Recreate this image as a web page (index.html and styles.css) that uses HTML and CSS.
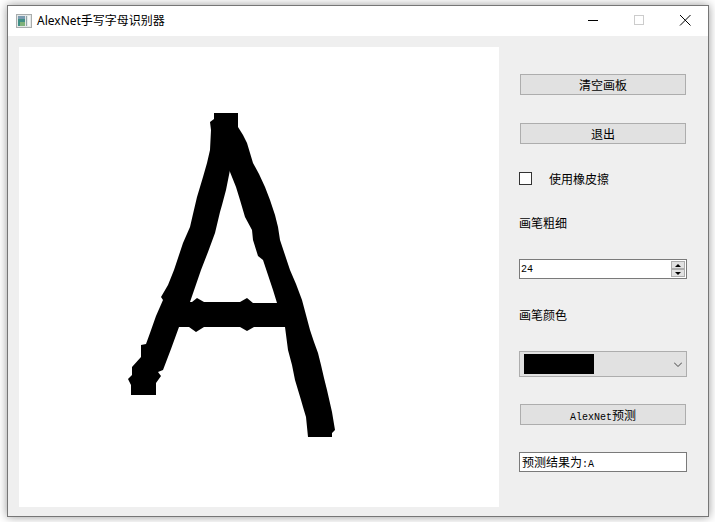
FILE: index.html
```html
<!DOCTYPE html>
<html lang="zh-CN">
  <head>
    <meta charset="UTF-8" />
    <meta name="viewport" content="width=device-width, initial-scale=1.0" />
    <title>AlexNet手写字母识别器</title>
    <link rel="stylesheet" href="styles.css">
  </head>
  <body>
    <div class="window">
      <div class="titlebar">
        <svg class="app-icon" width="16" height="14" viewBox="0 0 16 14">
          <rect x="0.5" y="0.5" width="15" height="13" fill="#e4e8e8" stroke="#a9adad" />
          <rect x="2" y="2" width="7" height="10" fill="#3f8f86" />
          <rect x="2" y="2" width="7" height="3" fill="#7a9ab0" />
          <rect x="4" y="8" width="5" height="4" fill="#7fb27a" />
          <rect x="10" y="2" width="1" height="10" fill="#8fa4a8" />
          <rect x="12" y="2" width="2" height="10" fill="#f6f8f8" />
        </svg>
        <span class="title">AlexNet手写字母识别器</span>
        <div class="win-controls">
          <svg class="win-btn" width="46" height="30" viewBox="0 0 46 30">
            <path d="M18 14.5H28" stroke="#000" fill="none" />
          </svg>
          <svg class="win-btn" width="46" height="30" viewBox="0 0 46 30">
            <rect x="18.5" y="9.5" width="9" height="9" stroke="#ccc" fill="none" />
          </svg>
          <svg class="win-btn" width="46" height="30" viewBox="0 0 46 30">
            <path d="M18 9L28.5 19.5M28.5 9L18 19.5" stroke="#000" fill="none" />
          </svg>
        </div>
      </div>

      <div class="main">
        <svg class="canvas" width="480" height="460" viewBox="19 47 480 460">
          <!-- left leg -->
          <polygon points="214,113 238,113 238,127 232,160 226,190 222,205 220,212 215,233 208,252 201,270 190,302 179,327 171,349 163,370 158,372 161,376 156,383 156,395 131,395 131,385 128,379 132,375 132,367 141,357 141,345 146,344 150,333 156,316 163,300 161,297 168,285 174,270 179,255 183,243 190,227 193,214 197,197 203,177 207,163 210,150 211,130 210,122 214,119" />
          <!-- right leg -->
          <polygon points="238,113 238,127 243,135 247,143 250,153 253,163 259,174 265,187 270,200 275,215 278,227 280,240 285,255 290,270 296,284 302,300 306,315 310,330 314,342 318,353 321,365 324,378 327,390 332,412 335,430 332,433 332,437 308,437 306,417 303,407 301,400 295,380 292,365 288,350 285,327 277,303 273,290 268,275 263,260 258,256 253,240 252,230 245,217 240,200 236,187 230,172 222,150" />
          <!-- cross bar -->
          <polygon points="186,302 192,302 197,298 204,302 240,302 247,298 253,303 290,303 295,327 254,327 247,331 240,327 204,327 196,332 189,327 176,327" />
        </svg>

        <div class="side">
          <button class="btn">清空画板</button>
          <button class="btn">退出</button>
          <label class="check-row">
            <input class="check" type="checkbox" />
            <span>使用橡皮擦</span>
          </label>
          <div class="field-label field-label-first">画笔粗细</div>
          <div class="spinbox">
            <input class="spin-input" type="text" value="24" />
            <div class="spin-btns">
              <div class="spin-btn"><i class="arrow-up"></i></div>
              <div class="spin-btn"><i class="arrow-down"></i></div>
            </div>
          </div>
          <div class="field-label">画笔颜色</div>
          <div class="combo">
            <div class="swatch"></div>
            <svg class="chevron" width="8" height="5" viewBox="0 0 8 5">
              <path d="M0 0.5L4 4.5L8 0.5" stroke="#444" fill="none" />
            </svg>
          </div>
          <button class="btn tight"><span class="mono">AlexNet</span>预测</button>
          <div class="result tight">预测结果为<span class="mono">:A</span></div>
        </div>
      </div>
    </div>
  </body>
</html>
```

FILE: styles.css
```css
html,
body {
  margin: 0;
  height: 100%;
  overflow: hidden;
}

body {
  background-color: #fff;
  font-family: "Noto Sans CJK SC", sans-serif;
  font-size: 12px;
  color: #000;
}

.window {
  box-sizing: border-box;
  width: 702px;
  height: 512px;
  margin: 5px 0 0 7px;
  border: 1px solid #767676;
  box-shadow: 0 0 9px rgba(0, 0, 0, 0.4);
  background-color: #efefef;
}

.titlebar {
  display: flex;
  align-items: center;
  height: 30px;
  padding-left: 8px;
  background-color: #fff;
}

.app-icon {
  margin-right: 5px;
}

.title {
  font-family: "Noto Sans", "Noto Sans CJK SC", sans-serif;
  line-height: 16px;
}

.win-controls {
  display: flex;
  margin-left: auto;
}

.win-btn {
  display: block;
}

.main {
  display: flex;
  box-sizing: border-box;
  height: 480px;
  padding: 11px;
}

.canvas {
  display: block;
  flex: none;
  background-color: #fff;
}

.side {
  display: flex;
  flex-direction: column;
  gap: 28px;
  width: 168px;
  margin-left: 20px;
  padding-top: 27px;
}

.btn {
  box-sizing: border-box;
  height: 21px;
  margin: 0 1px;
  padding: 0;
  border: 1px solid #adadad;
  background-color: #e1e1e1;
  font: inherit;
  line-height: 19px;
}

.mono {
  font-family: "Liberation Mono", monospace;
  font-size: 10px;
}

.tight {
  margin-top: -1px;
}

.check-row {
  display: flex;
  align-items: center;
  height: 13px;
  line-height: 13px;
}

.check {
  appearance: none;
  box-sizing: border-box;
  width: 13px;
  height: 13px;
  margin: 0 17px 0 0;
  border: 1px solid #333;
  background-color: #fff;
}

.field-label {
  height: 16px;
  line-height: 16px;
}

.field-label-first {
  margin-top: 2px;
}

.spinbox {
  display: flex;
  align-items: center;
  box-sizing: border-box;
  height: 20px;
  padding-right: 1px;
  border: 1px solid #7a7a7a;
  background-color: #fff;
}

.spin-input {
  flex: 1;
  min-width: 0;
  padding: 0 0 0 1px;
  border: none;
  outline: none;
  font-family: "Liberation Mono", monospace;
  font-size: 10px;
}

.spin-btns {
  display: flex;
  flex-direction: column;
  width: 14px;
}

.spin-btn {
  display: flex;
  align-items: center;
  justify-content: center;
  box-sizing: border-box;
  height: 8px;
  border: 1px solid #adadad;
  background-color: #e1e1e1;
}

.arrow-up,
.arrow-down {
  width: 0;
  height: 0;
  border-left: 3px solid transparent;
  border-right: 3px solid transparent;
}

.arrow-up {
  border-bottom: 3px solid #000;
}

.arrow-down {
  border-top: 3px solid #000;
}

.combo {
  display: flex;
  align-items: center;
  justify-content: space-between;
  box-sizing: border-box;
  height: 26px;
  padding: 0 4px;
  border: 1px solid #adadad;
  background-color: #e1e1e1;
}

.chevron {
  margin-top: 1px;
}

.swatch {
  width: 70px;
  height: 20px;
  background-color: #000;
}

.result {
  box-sizing: border-box;
  height: 20px;
  padding-left: 2px;
  border: 1px solid #7a7a7a;
  background-color: #fff;
  line-height: 18px;
}
```
